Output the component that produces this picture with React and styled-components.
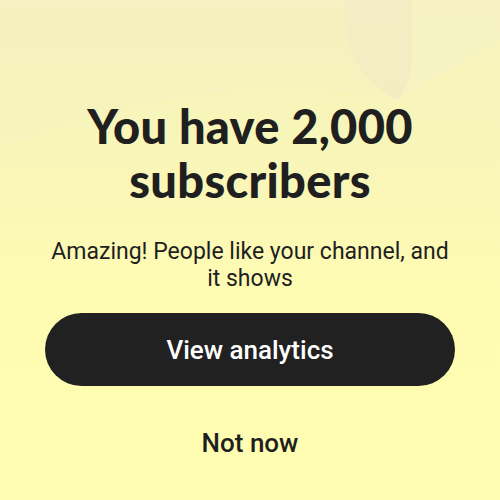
import React from 'react'
import styled, { createGlobalStyle } from 'styled-components'

const GlobalStyle = createGlobalStyle`
  html, body {
    margin: 0;
    padding: 0;
  }
  body {
    background: #fefcb3;
  }
`

const Screen = styled.div`
  position: relative;
  width: 500px;
  height: 500px;
  overflow: hidden;
  background: linear-gradient(180deg, #f6f3bf 0%, #f9f6b8 35%, #fefcb2 60%, #fffdb1 100%);
  display: flex;
  flex-direction: column;
  align-items: center;
  box-sizing: border-box;
  padding: 99px 40px 0;
`

const Decor = styled.svg`
  position: absolute;
  top: 0;
  left: 0;
  width: 500px;
  height: 500px;
  pointer-events: none;
`

const Title = styled.h1`
  position: relative;
  margin: 0;
  font-family: "Lato", "Noto Sans", sans-serif;
  font-weight: 900;
  font-size: 47px;
  line-height: 54px;
  letter-spacing: 0.3px;
  color: #1f1f1f;
  text-align: center;
`

const Subtitle = styled.p`
  position: relative;
  margin: 31px 0 0;
  font-family: "Roboto", sans-serif;
  font-weight: 400;
  font-size: 23px;
  line-height: 27px;
  color: #1f1f1f;
  text-align: center;
`

const Button = styled.button`
  position: relative;
  margin-top: 21px;
  width: 410px;
  height: 73px;
  flex-shrink: 0;
  border: none;
  border-radius: 37px;
  background: ${p => (p.primary ? '#212121' : 'transparent')};
  color: ${p => (p.primary ? '#ffffff' : '#1f1f1f')};
  font-family: "Roboto", sans-serif;
  font-weight: 500;
  font-size: 26px;
  cursor: pointer;
`

const TextButton = styled(Button)`
  margin-top: 42px;
  height: 30px;
  width: auto;
  padding: 0 10px;
`

export default function App() {
  return (
    <>
      <GlobalStyle />
      <Screen>
        <Decor viewBox="0 0 500 500">
          <path d="M345 0 C 340 45, 360 80, 398 100 C 420 70, 410 30, 412 0 Z" fill="#ecdfcf" opacity="0.35" />
          <path d="M412 0 C 410 30, 420 70, 398 100 L 500 40 L 500 0 Z" fill="#faf6c8" opacity="0.5" />
          <path d="M0 150 C 120 100, 260 70, 398 100 L 500 40 L 500 0 L 0 0 Z" fill="#f2eec4" opacity="0.3" />
        </Decor>
        <Title>You have 2,000<br />subscribers</Title>
        <Subtitle>Amazing! People like your channel, and<br />it shows</Subtitle>
        <Button primary>View analytics</Button>
        <TextButton>Not now</TextButton>
      </Screen>
    </>
  )
}
